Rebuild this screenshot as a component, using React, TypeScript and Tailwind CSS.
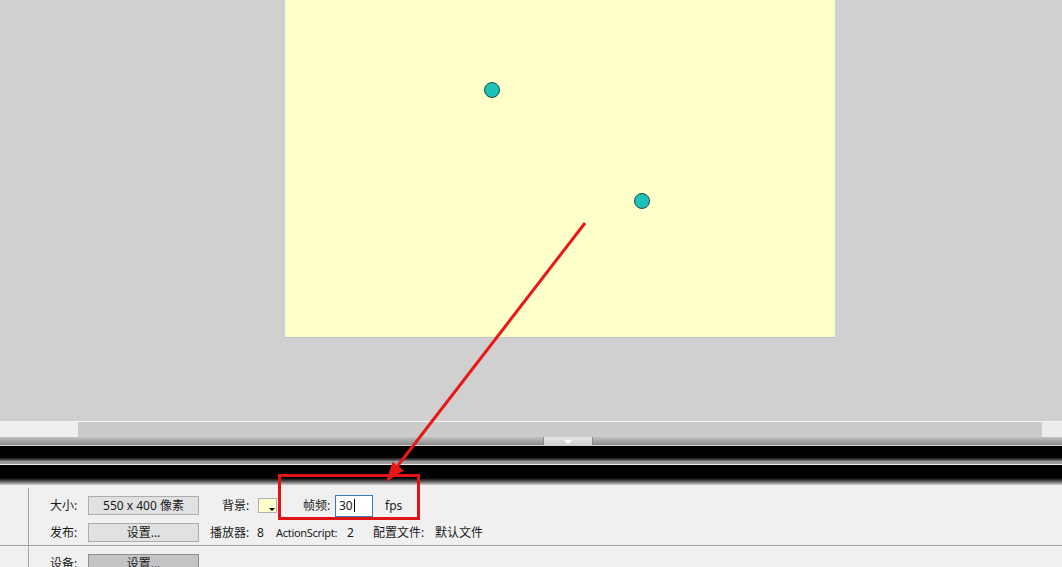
const font = { fontFamily: '"Noto Sans", "Noto Sans CJK SC", sans-serif' }

function Btn({ label, dark }: { label: string; dark?: boolean }) {
  return (
    <div
      className={`flex h-[19px] w-[111px] shrink-0 items-center justify-center border text-[12px] leading-none text-[#1a1a1a] ${
        dark ? 'border-[#8f8f8f] bg-[#c4c4c4]' : 'border-[#adadad] bg-[#e1e1e1]'
      }`}
    >
      {label}
    </div>
  )
}

function Stage() {
  return (
    <div className="relative ml-[285px] h-[337px] w-[550px] border-l border-[#f4f4e0] bg-[#ffffcc] shadow-[0_1px_0_#c4c4c4]">
      <span className="absolute left-[198px] top-[82px] h-[16px] w-[16px] rounded-full border border-[#1d4d4a] bg-[#1cc2b8]" />
      <span className="absolute left-[348px] top-[193px] h-[16px] w-[16px] rounded-full border border-[#1d4d4a] bg-[#1cc2b8]" />
    </div>
  )
}

function Bands() {
  return (
    <div className="flex flex-col">
      <div className="h-px bg-[#f4f4f4]" />
      <div className="flex h-[15px]">
        <div className="w-[78px] bg-[#efefef]" />
        <div className="flex-1 bg-[#cbcbcb]" />
        <div className="w-[20px] bg-[#ececec]" />
      </div>
      <div className="flex h-[8px] bg-gradient-to-b from-[#c2c2c2] to-[#8a8a8a]">
        <div className="ml-[543px] flex w-[50px] items-center justify-center border-x border-[#8c8c8c] bg-gradient-to-b from-[#e6e6e6] to-[#cfcfcf]">
          <span className="mt-[1px] h-0 w-0 border-x-[4px] border-t-[4px] border-x-transparent border-t-white" />
        </div>
      </div>
      <div className="h-px bg-[#d4d4d4]" />
      <div className="h-[15px] bg-gradient-to-b from-black via-black via-[70%] to-[#7a7a7a]" />
      <div className="h-[3px] bg-[#9c9c9c]" />
      <div className="h-px bg-[#ececec]" />
      <div className="h-[20px] bg-gradient-to-b from-black via-black via-[60%] to-[#d2d2d2]" />
    </div>
  )
}

function Panel() {
  return (
    <div className="flex flex-1 flex-col bg-[#f0f0f0] text-[12px] leading-none text-[#1a1a1a]">
      <div className="flex h-[61px] border-b border-[#a0a0a0]">
        <div className="mt-[3px] w-[29px] shrink-0 border-r border-[#a8a8a8]" />
        <div className="flex flex-col pt-[11px]">
          <div className="flex h-[19px] items-center">
            <span className="ml-[21px] w-[38px]">大小:</span>
            <Btn label="550 x 400 像素" />
            <span className="ml-[23px] w-[36px]">背景:</span>
            <span className="relative h-[15px] w-[19px] border border-[#b0b0b0] bg-[#ffffcc]">
              <span className="absolute bottom-[1px] right-[1px] h-0 w-0 border-x-[3px] border-t-[3px] border-x-transparent border-t-black" />
            </span>
            <span className="ml-[26px] w-[32px]">帧频:</span>
            <span className="flex h-[22px] w-[38px] items-center border border-[#3a7cb0] bg-white pl-[3px]">
              30<span className="ml-[1px] h-[13px] w-px bg-black" />
            </span>
            <span className="ml-[12px]">fps</span>
          </div>
          <div className="mt-[8px] flex h-[19px] items-center whitespace-nowrap">
            <span className="ml-[21px] w-[38px]">发布:</span>
            <Btn label="设置..." />
            <span className="ml-[11px] w-[47px]">播放器:</span>
            <span className="w-[19px]">8</span>
            <span className="w-[71px] text-[11px] tracking-[-0.3px]">ActionScript:</span>
            <span className="w-[26px]">2</span>
            <span className="w-[62px]">配置文件:</span>
            <span>默认文件</span>
          </div>
        </div>
      </div>
      <div className="flex flex-1">
        <div className="w-[29px] shrink-0 border-r border-[#a8a8a8]" />
        <div className="flex pt-[8px]">
          <span className="ml-[21px] mt-[4px] w-[38px]">设备:</span>
          <Btn label="设置..." dark />
        </div>
      </div>
    </div>
  )
}

export default function App() {
  return (
    <div className="relative flex h-[567px] w-[1062px] flex-col overflow-hidden bg-[#d0d0d0]" style={font}>
      <div className="h-[421px] shrink-0">
        <Stage />
      </div>
      <Bands />
      <Panel />

      {/* annotation overlay */}
      <div className="pointer-events-none absolute left-[278px] top-[474px] h-[46px] w-[142px] border-[3px] border-[#e01414]" />
      <svg className="pointer-events-none absolute inset-0" width="1062" height="567">
        <line x1="585" y1="223" x2="396" y2="468" stroke="#e81818" strokeWidth="3" />
        <polygon points="386,482 403.7,470.4 392.6,461.8" fill="#e81818" />
      </svg>
    </div>
  )
}
